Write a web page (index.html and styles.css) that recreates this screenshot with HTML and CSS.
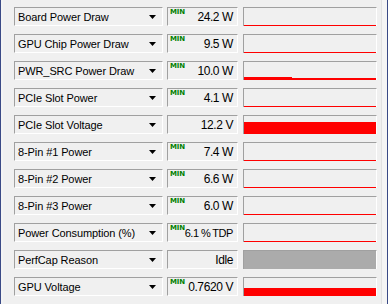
FILE: index.html
```html
<!DOCTYPE html>
<html>
<head>
<meta charset="utf-8">
<link rel="stylesheet" href="styles.css">
</head>
<body>
<div class="window">
  <div class="edge"></div>
  <div class="panel">
    <div class="row">
      <div class="combo"><span class="name">Board Power Draw</span><svg class="arrow" width="7" height="4" viewBox="0 0 7 4"><polygon points="0,0 7,0 3.5,4"/></svg></div>
      <div class="value"><span class="min">MIN</span><span class="num">24.2 W</span></div>
      <div class="graph"><div class="bar" style="height:1px"></div></div>
    </div>
    <div class="row">
      <div class="combo"><span class="name">GPU Chip Power Draw</span><svg class="arrow" width="7" height="4" viewBox="0 0 7 4"><polygon points="0,0 7,0 3.5,4"/></svg></div>
      <div class="value"><span class="min">MIN</span><span class="num">9.5 W</span></div>
      <div class="graph"><div class="bar" style="height:1px"></div></div>
    </div>
    <div class="row">
      <div class="combo"><span class="name">PWR_SRC Power Draw</span><svg class="arrow" width="7" height="4" viewBox="0 0 7 4"><polygon points="0,0 7,0 3.5,4"/></svg></div>
      <div class="value"><span class="min">MIN</span><span class="num">10.0 W</span></div>
      <div class="graph"><svg class="plot" width="132" height="18" viewBox="0 0 132 18"><rect x="0" y="15" width="48" height="3" fill="#ff0000"/><rect x="48" y="16" width="84" height="2" fill="#ff0000"/></svg></div>
    </div>
    <div class="row">
      <div class="combo"><span class="name">PCIe Slot Power</span><svg class="arrow" width="7" height="4" viewBox="0 0 7 4"><polygon points="0,0 7,0 3.5,4"/></svg></div>
      <div class="value"><span class="min">MIN</span><span class="num">4.1 W</span></div>
      <div class="graph"><div class="bar" style="height:1px"></div></div>
    </div>
    <div class="row">
      <div class="combo"><span class="name">PCIe Slot Voltage</span><svg class="arrow" width="7" height="4" viewBox="0 0 7 4"><polygon points="0,0 7,0 3.5,4"/></svg></div>
      <div class="value"><span class="num">12.2 V</span></div>
      <div class="graph"><div class="bar" style="height:12px"></div></div>
    </div>
    <div class="row">
      <div class="combo"><span class="name">8-Pin #1 Power</span><svg class="arrow" width="7" height="4" viewBox="0 0 7 4"><polygon points="0,0 7,0 3.5,4"/></svg></div>
      <div class="value"><span class="min">MIN</span><span class="num">7.4 W</span></div>
      <div class="graph"><div class="bar" style="height:1px"></div></div>
    </div>
    <div class="row">
      <div class="combo"><span class="name">8-Pin #2 Power</span><svg class="arrow" width="7" height="4" viewBox="0 0 7 4"><polygon points="0,0 7,0 3.5,4"/></svg></div>
      <div class="value"><span class="min">MIN</span><span class="num">6.6 W</span></div>
      <div class="graph"><div class="bar" style="height:1px"></div></div>
    </div>
    <div class="row">
      <div class="combo"><span class="name">8-Pin #3 Power</span><svg class="arrow" width="7" height="4" viewBox="0 0 7 4"><polygon points="0,0 7,0 3.5,4"/></svg></div>
      <div class="value"><span class="min">MIN</span><span class="num">6.0 W</span></div>
      <div class="graph"><div class="bar" style="height:1px"></div></div>
    </div>
    <div class="row">
      <div class="combo"><span class="name">Power Consumption (%)</span><svg class="arrow" width="7" height="4" viewBox="0 0 7 4"><polygon points="0,0 7,0 3.5,4"/></svg></div>
      <div class="value"><span class="min">MIN</span><span class="num num-tight">6.1 % TDP</span></div>
      <div class="graph"><div class="bar" style="height:1px"></div></div>
    </div>
    <div class="row">
      <div class="combo"><span class="name">PerfCap Reason</span><svg class="arrow" width="7" height="4" viewBox="0 0 7 4"><polygon points="0,0 7,0 3.5,4"/></svg></div>
      <div class="value"><span class="num">Idle</span></div>
      <div class="graph graph-grey"></div>
    </div>
    <div class="row">
      <div class="combo"><span class="name">GPU Voltage</span><svg class="arrow" width="7" height="4" viewBox="0 0 7 4"><polygon points="0,0 7,0 3.5,4"/></svg></div>
      <div class="value"><span class="min">MIN</span><span class="num">0.7620 V</span></div>
      <div class="graph"><div class="bar" style="height:8px"></div></div>
    </div>
  </div>
  <div class="side"></div>
</div>
</body>
</html>
```
FILE: styles.css
```css
* { box-sizing: border-box; }
html, body {
  margin: 0;
  padding: 0;
  background: #f0f0f0;
}
.window {
  width: 388px;
  height: 304px;
  display: flex;
  background: #f0f0f0;
  border-left: 1px solid #3a4a86;
  border-right: 1px solid #3a4a86;
  overflow: hidden;
}
.edge {
  width: 2px;
  background: #f4f4f4;
  flex: none;
}
.panel {
  flex: 1;
  padding: 7px 0 0 11px;
  display: flex;
  flex-direction: column;
  gap: 8px;
}
.side {
  width: 6px;
  flex: none;
  border-left: 1px solid #e2e2e2;
  background: #f5f5f5;
}
.row {
  display: flex;
  height: 19px;
  align-items: stretch;
}
.combo {
  width: 149px;
  flex: none;
  display: flex;
  align-items: center;
  justify-content: space-between;
  border-top: 1px solid #a0a0a0;
  border-left: 1px solid #a0a0a0;
  border-right: 1px solid #ffffff;
  border-bottom: 1px solid #ffffff;
  padding: 0 6px 0 3px;
  font-family: "Liberation Sans", Arial, sans-serif;
  font-size: 11px;
  color: #000;
  white-space: nowrap;
}
.name {
  letter-spacing: -0.1px;
}
.arrow {
  display: block;
  flex: none;
}
.arrow polygon { fill: #000; }
.value {
  width: 71px;
  flex: none;
  margin-left: 4px;
  position: relative;
  border-top: 1px solid #a0a0a0;
  border-left: 1px solid #a0a0a0;
  border-right: 1px solid #ffffff;
  border-bottom: 1px solid #ffffff;
  display: flex;
  align-items: center;
  justify-content: flex-end;
  padding-right: 4px;
  font-family: "Liberation Sans", Arial, sans-serif;
  font-size: 12px;
  color: #000;
  white-space: nowrap;
}
.num {
  letter-spacing: -0.4px;
}
.num-tight {
  font-size: 11px;
  letter-spacing: -0.45px;
  word-spacing: -0.3px;
}
.min {
  position: absolute;
  left: 2px;
  top: 1px;
  font-family: "DejaVu Sans", sans-serif;
  font-size: 7px;
  font-weight: bold;
  letter-spacing: -0.2px;
  color: #008000;
  line-height: 7px;
}
.graph {
  width: 134px;
  flex: none;
  margin-left: 5px;
  border-top: 1px solid #a0a0a0;
  border-left: 1px solid #a0a0a0;
  border-right: 1px solid #ffffff;
  background: #f0f0f0;
  display: flex;
  flex-direction: column;
  justify-content: flex-end;
}
.graph-grey {
  background: #ababab;
}
.bar {
  background: #ff0000;
  width: 100%;
}
.plot {
  display: block;
}
```
